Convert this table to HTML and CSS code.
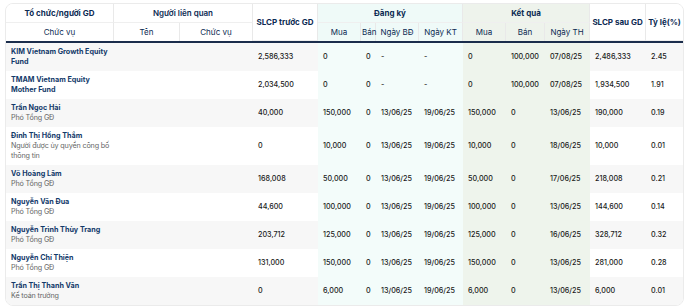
FILE: index.html
```html
<!DOCTYPE html>
<html lang="vi">
<head>
    <meta charset="UTF-8">
    <meta name="viewport" content="width=device-width, initial-scale=1.0">
    <title>Giao dịch cổ đông nội bộ</title>
    <link rel="stylesheet" href="styles.css">
</head>
<body>
    <div class="table-wrap">
        <table class="trade-table">
            <colgroup>
                <col class="c-org">
                <col class="c-name">
                <col class="c-pos">
                <col class="c-before">
                <col class="c-buy">
                <col class="c-sell">
                <col class="c-date">
                <col class="c-date2">
                <col class="c-rbuy">
                <col class="c-rsell">
                <col class="c-rdate">
                <col class="c-after">
                <col class="c-ratio">
            </colgroup>
            <thead>
                <tr>
                    <th class="strong">Tổ chức/người GD</th>
                    <th colspan="2" class="medium">Người liên quan</th>
                    <th rowspan="2" class="strong">SLCP trước GD</th>
                    <th colspan="4" class="strong reg">Đăng ký</th>
                    <th colspan="3" class="strong res">Kết quả</th>
                    <th rowspan="2" class="strong">SLCP sau GD</th>
                    <th rowspan="2" class="strong last">Tỷ lệ(%)</th>
                </tr>
                <tr>
                    <th>Chức vụ</th>
                    <th>Tên</th>
                    <th>Chức vụ</th>
                    <th class="reg">Mua</th>
                    <th class="reg">Bán</th>
                    <th class="reg">Ngày BĐ</th>
                    <th class="reg">Ngày KT</th>
                    <th class="res">Mua</th>
                    <th class="res">Bán</th>
                    <th class="res">Ngày TH</th>
                </tr>
            </thead>
            <tbody>
                <tr>
                    <td><div class="name">KIM Vietnam Growth Equity Fund</div></td>
                    <td></td><td></td>
                    <td>2,586,333</td>
                    <td class="reg">0</td><td class="reg">0</td><td class="reg">-</td><td class="reg">-</td>
                    <td class="res">0</td><td class="res">100,000</td><td class="res">07/08/25</td>
                    <td>2,486,333</td><td>2.45</td>
                </tr>
                <tr>
                    <td><div class="name">TMAM Vietnam Equity Mother Fund</div></td>
                    <td></td><td></td>
                    <td>2,034,500</td>
                    <td class="reg">0</td><td class="reg">0</td><td class="reg">-</td><td class="reg">-</td>
                    <td class="res">0</td><td class="res">100,000</td><td class="res">07/08/25</td>
                    <td>1,934,500</td><td>1.91</td>
                </tr>
                <tr>
                    <td><div class="name">Trần Ngọc Hải</div><div class="role">Phó Tổng GĐ</div></td>
                    <td></td><td></td>
                    <td>40,000</td>
                    <td class="reg">150,000</td><td class="reg">0</td><td class="reg">13/06/25</td><td class="reg">19/06/25</td>
                    <td class="res">150,000</td><td class="res">0</td><td class="res">13/06/25</td>
                    <td>190,000</td><td>0.19</td>
                </tr>
                <tr>
                    <td><div class="name">Đinh Thị Hồng Thắm</div><div class="role">Người được ủy quyền công bố thông tin</div></td>
                    <td></td><td></td>
                    <td>0</td>
                    <td class="reg">10,000</td><td class="reg">0</td><td class="reg">13/06/25</td><td class="reg">19/06/25</td>
                    <td class="res">10,000</td><td class="res">0</td><td class="res">18/06/25</td>
                    <td>10,000</td><td>0.01</td>
                </tr>
                <tr>
                    <td><div class="name">Võ Hoàng Lâm</div><div class="role">Phó Tổng GĐ</div></td>
                    <td></td><td></td>
                    <td>168,008</td>
                    <td class="reg">50,000</td><td class="reg">0</td><td class="reg">13/06/25</td><td class="reg">19/06/25</td>
                    <td class="res">50,000</td><td class="res">0</td><td class="res">17/06/25</td>
                    <td>218,008</td><td>0.21</td>
                </tr>
                <tr>
                    <td><div class="name">Nguyễn Văn Đua</div><div class="role">Phó Tổng GĐ</div></td>
                    <td></td><td></td>
                    <td>44,600</td>
                    <td class="reg">100,000</td><td class="reg">0</td><td class="reg">13/06/25</td><td class="reg">19/06/25</td>
                    <td class="res">100,000</td><td class="res">0</td><td class="res">13/06/25</td>
                    <td>144,600</td><td>0.14</td>
                </tr>
                <tr>
                    <td><div class="name">Nguyễn Trình Thùy Trang</div><div class="role">Phó Tổng GĐ</div></td>
                    <td></td><td></td>
                    <td>203,712</td>
                    <td class="reg">125,000</td><td class="reg">0</td><td class="reg">13/06/25</td><td class="reg">19/06/25</td>
                    <td class="res">125,000</td><td class="res">0</td><td class="res">16/06/25</td>
                    <td>328,712</td><td>0.32</td>
                </tr>
                <tr>
                    <td><div class="name">Nguyễn Chí Thiện</div><div class="role">Phó Tổng GĐ</div></td>
                    <td></td><td></td>
                    <td>131,000</td>
                    <td class="reg">150,000</td><td class="reg">0</td><td class="reg">13/06/25</td><td class="reg">19/06/25</td>
                    <td class="res">150,000</td><td class="res">0</td><td class="res">13/06/25</td>
                    <td>281,000</td><td>0.28</td>
                </tr>
                <tr>
                    <td><div class="name">Trần Thị Thanh Vân</div><div class="role">Kế toán trưởng</div></td>
                    <td></td><td></td>
                    <td>0</td>
                    <td class="reg">6,000</td><td class="reg">0</td><td class="reg">13/06/25</td><td class="reg">19/06/25</td>
                    <td class="res">6,000</td><td class="res">0</td><td class="res">13/06/25</td>
                    <td>6,000</td><td>0.01</td>
                </tr>
            </tbody>
        </table>
    </div>
</body>
</html>
```

FILE: styles.css
```css
body {
    margin: 0;
    background: #fff;
    font-family: Inter, "Noto Sans", sans-serif;
    font-size: 8px;
    color: #1c1c1c;
}
.table-wrap {
    margin: 3px 6px 0 5px;
    border: 1px solid #ebebeb;
    border-radius: 8px;
    overflow: hidden;
}
.trade-table {
    width: 100%;
    table-layout: fixed;
    border-collapse: separate;
    border-spacing: 0;
}
.c-org { width: 108px; }
.c-name { width: 66px; }
.c-pos { width: 73px; }
.c-before { width: 65px; }
.c-buy { width: 43px; }
.c-sell { width: 15px; }
.c-date { width: 43px; }
.c-date2 { width: 44px; }
.c-rbuy { width: 43px; }
.c-rsell { width: 39px; }
.c-rdate { width: 45px; }
.c-after { width: 56px; }
.c-ratio { width: 37px; }

th {
    height: 18px;
    padding: 0 1px;
    font-weight: 400;
    color: #0b2a52;
    text-align: center;
    white-space: nowrap;
    border-right: 1px solid #e9e9e9;
    border-bottom: 1px solid #efefef;
    background: #fff;
}
th.last { border-right: none; }
th.strong { font-weight: 700; }
th.medium { font-weight: 600; }
th.reg { background: #effaf8; }
th.res { background: #eef3ec; }
thead tr:last-child th { border-bottom: none; }

td {
    padding: 4px 5px;
    font-size: 7.2px;
    line-height: 10px;
    vertical-align: middle;
    white-space: nowrap;
    font-weight: 500;
    color: #1a1a1a;
}
td:first-child {
    white-space: normal;
    padding-right: 1px;
}
tbody tr:first-child td { border-top: 2px solid #1b2d4c; }
tbody tr:nth-child(odd) td { background: #f7f7f7; }
tbody td.reg { background: #f3fcfa !important; }
tbody td.res { background: #eef4ec !important; }

.name {
    font-weight: 700;
    color: #123a6a;
}
.role {
    font-weight: 400;
    color: #666;
    letter-spacing: -0.15px;
}
```
